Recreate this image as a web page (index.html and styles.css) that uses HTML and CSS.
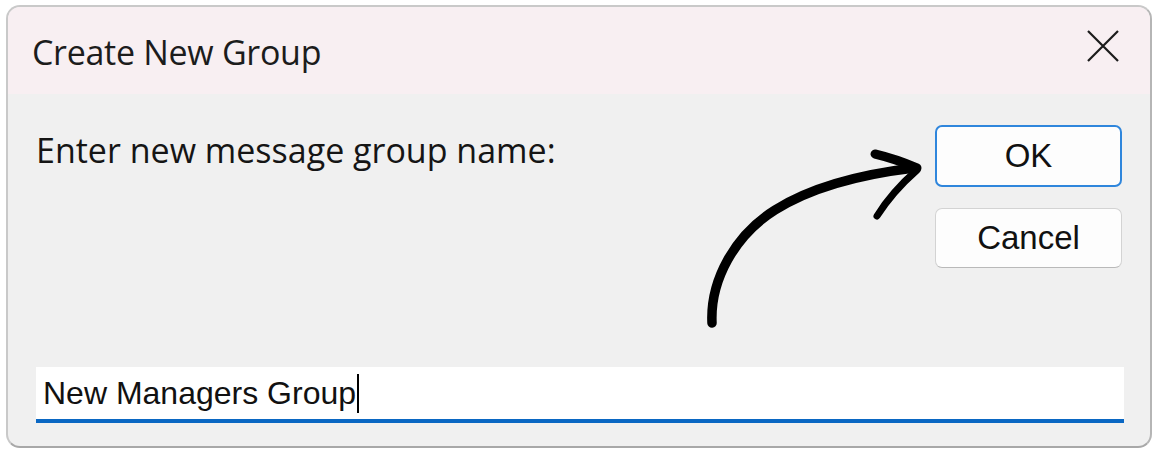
FILE: index.html
```html
<!DOCTYPE html>
<html>
<head>
<meta charset="utf-8">
<link rel="stylesheet" href="styles.css">
</head>
<body>
<div class="dialog">
  <div class="titlebar">
    <span class="title">Create New Group</span>
    <svg class="close" width="32" height="32" viewBox="0 0 32 32"><path d="M1 1 L31 31 M31 1 L1 31" stroke="#1b1b1b" stroke-width="2.2" fill="none"/></svg>
  </div>
  <div class="content">
    <div class="top-row">
      <div class="label">Enter new message group name:</div>
      <div class="buttons">
        <div class="btn btn-default">OK</div>
        <div class="btn">Cancel</div>
      </div>
    </div>
    <div class="field"><span class="value">New Managers Group</span><span class="caret"></span></div>
  </div>
  <svg class="arrow" width="250" height="205" viewBox="0 0 250 205">
    <path d="M32 193 C30 150 55 105 95 80 C130 58 175 45 234 38" stroke="#000" stroke-width="9.5" fill="none" stroke-linecap="round"/>
    <path d="M195 24 Q216 29 237 38" stroke="#000" stroke-width="9" fill="none" stroke-linecap="round"/>
    <path d="M237 40 Q212 62 197 86" stroke="#000" stroke-width="7" fill="none" stroke-linecap="round"/>
  </svg>
</div>
</body>
</html>
```
FILE: styles.css
```css
html, body {
  margin: 0;
  padding: 0;
  background: #ffffff;
}
body {
  width: 1156px;
  height: 453px;
  overflow: hidden;
}
.dialog {
  position: relative;
  margin: 5px 0 0 6px;
  width: 1146px;
  height: 443px;
  box-sizing: border-box;
  border: 2px solid #c9c9c9;
  border-right-color: #b5b5b5;
  border-bottom-color: #a8a8a8;
  border-radius: 14px;
  background: #f0f0f0;
  overflow: hidden;
  display: flex;
  flex-direction: column;
  font-family: "Open Sans", "Noto Sans", sans-serif;
  color: #1a1a1a;
}
.titlebar {
  height: 87px;
  flex: none;
  background: #f8eff2;
  display: flex;
  align-items: center;
  justify-content: space-between;
  padding: 2px 31px 0 24px;
  box-sizing: border-box;
}
.title {
  font-size: 34px;
  letter-spacing: -0.3px;
  color: #1c1c1c;
}
.close {
  display: block;
  margin-top: -12px;
}
.content {
  flex: 1;
  display: flex;
  flex-direction: column;
  justify-content: space-between;
  padding: 31px 26px 23px 28px;
}
.top-row {
  display: flex;
  justify-content: space-between;
  align-items: flex-start;
}
.label {
  font-size: 34px;
  margin-top: 2px;
  color: #151515;
}
.buttons {
  display: flex;
  flex-direction: column;
  gap: 21px;
  margin-right: 2px;
}
.btn {
  width: 187px;
  height: 60px;
  box-sizing: border-box;
  background: #fdfdfd;
  border: 1px solid #d3d3d3;
  border-bottom-color: #b9b9b9;
  border-radius: 7px;
  display: flex;
  align-items: center;
  justify-content: center;
  font-family: "Liberation Sans", Arial, sans-serif;
  font-size: 33px;
  color: #111;
}
.btn-default {
  height: 62px;
  border: 2px solid #2f86dc;
}
.field {
  height: 56px;
  box-sizing: border-box;
  background: #ffffff;
  border-bottom: 4px solid #0a67c3;
  display: flex;
  align-items: center;
  padding: 0 0 0 7px;
  font-family: "Liberation Sans", Arial, sans-serif;
  font-size: 32px;
  color: #111;
}
.caret {
  display: inline-block;
  width: 2px;
  height: 39px;
  background: #000;
  margin-left: 1px;
}
.arrow {
  position: absolute;
  left: 672px;
  top: 123px;
}
```
